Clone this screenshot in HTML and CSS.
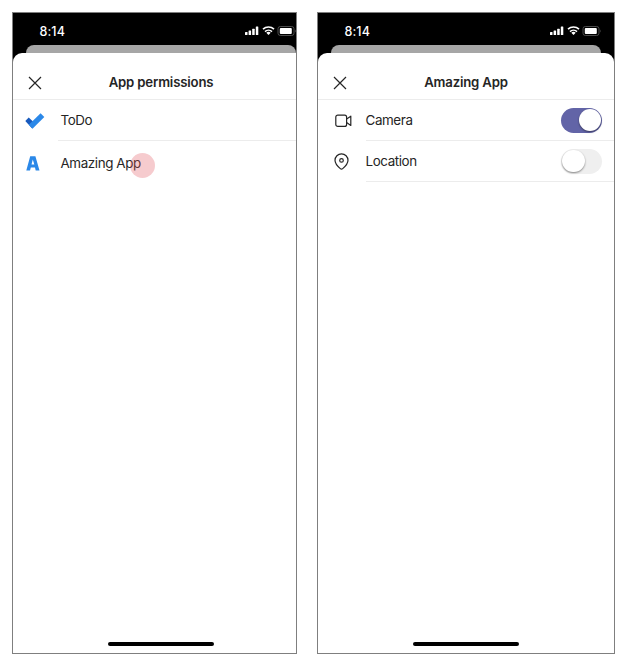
FILE: index.html
```html
<!DOCTYPE html>
<html lang="en">
<head>
<meta charset="utf-8">
<title>App permissions</title>
<link rel="stylesheet" href="styles.css">
</head>
<body>
<svg class="defs" width="0" height="0" aria-hidden="true">
  <symbol id="status" viewBox="0 0 54 12">
    <g fill="#fff">
      <rect x="0" y="7" width="2.5" height="3" rx=".5"/>
      <rect x="3.6" y="5.6" width="2.5" height="4.4" rx=".5"/>
      <rect x="7.2" y="3.8" width="2.5" height="6.2" rx=".5"/>
      <rect x="10.8" y="1.6" width="2.5" height="8.4" rx=".5"/>
      <path d="M23.5 10l-2.200-2.200a3.200 3.200 0 0 1 4.400 0z"/>
      <rect x="34.800" y="2.900" width="12" height="6.200" rx="1"/>
    </g>
    <g fill="none" stroke="#fff" stroke-width="1.600">
      <path d="M18 4.200a8 8 0 0 1 11 0"/>
      <path d="M20 6.600a5.100 5.100 0 0 1 7 0"/>
    </g>
    <rect x="33" y="1.500" width="16" height="9" rx="2.300" fill="none" stroke="#555" stroke-width=".9"/>
    <path d="M50.200 4.600q1.300 1.400 0 2.800z" fill="#555"/>
  </symbol>
  <symbol id="close" viewBox="0 0 14 14">
    <path d="M1 1l12 12M13 1L1 13" fill="none" stroke="#252525" stroke-width="1.200"/>
  </symbol>
</svg>
<main class="board">
  <section class="phone phone-cropped">
    <div class="screen">
      <div class="status"><span class="time">8:14</span><svg class="signals"><use href="#status"/></svg></div>
      <div class="back-card"></div>
      <div class="sheet">
        <header class="header"><svg class="close"><use href="#close"/></svg><h1 class="title">App permissions</h1></header>
        <div class="row">
          <span class="icon"><svg class="todo" viewBox="0 0 20 16"><path d="M.3 8L3.700 4.400 9 9.600 7.200 15.400z" fill="#185abd"/><path d="M3.800 11.700L15.600.2 19.300 4 7.500 15.800z" fill="#2b88e8"/></svg></span>
          <span class="label divided">ToDo</span>
        </div>
        <div class="row row-tall">
          <span class="icon"><svg class="letter" viewBox="0 0 14 15"><path fill-rule="evenodd" d="M4.200.3h5.200l4.100 14.200H9.700L9 11.400H4.800l-.8 3.100H.3zM6.800 3.400L5.500 8.400h2.800z" fill="#2b88e8"/></svg></span>
          <span class="label"><span class="target">Amazing App<i class="tap"></i></span></span>
        </div>
      </div>
      <div class="home"></div>
    </div>
  </section>
  <section class="phone phone-detail">
    <div class="screen">
      <div class="status"><span class="time">8:14</span><svg class="signals"><use href="#status"/></svg></div>
      <div class="back-card"></div>
      <div class="sheet">
        <header class="header"><svg class="close"><use href="#close"/></svg><h1 class="title">Amazing App</h1></header>
        <div class="row">
          <span class="icon"><svg class="camera" viewBox="0 0 17 14"><g fill="none" stroke="#252525" stroke-width="1.200" stroke-linejoin="round"><rect x=".8" y="1.200" width="10.800" height="11.200" rx="2"/><path d="M11.600 5L15.800 2.200v9.200l-4.200-2.800"/></g></svg></span>
          <span class="label divided">Camera<i class="switch on"></i></span>
        </div>
        <div class="row">
          <span class="icon"><svg class="pin" viewBox="0 0 15 17"><g fill="none" stroke="#252525" stroke-width="1.200"><path d="M7.500.8a6.500 6.500 0 0 0-6.500 6.500c0 3.100 2.400 5.900 5.300 8.300a1.900 1.900 0 0 0 2.400 0C11.600 13.200 14 10.400 14 7.300A6.500 6.500 0 0 0 7.500.8z"/><circle cx="7.500" cy="7.400" r="1.800"/></g></svg></span>
          <span class="label divided">Location<i class="switch"></i></span>
        </div>
      </div>
      <div class="home"></div>
    </div>
  </section>
</main>
</body>
</html>
```
FILE: styles.css
```css
* { box-sizing: border-box; }
body { margin: 0; background: #fff; color: #252525; font-family: Inter, "Liberation Sans", sans-serif; }
.defs { display: none; }
.board { display: flex; gap: 20px; padding: 12px; width: 629px; }
.phone { flex: none; width: 298px; height: 642px; border: 1px solid #7f7f7f; overflow: hidden; }
.phone-cropped { width: 285px; }
.screen { display: flex; flex-direction: column; width: 296px; height: 640px; background: linear-gradient(#000 60px, #fff 60px); }
.status { display: flex; flex: none; justify-content: space-between; height: 32px; padding: 0 10px 0 26.5px; }
.time { color: #fff; font-size: 12.5px; font-weight: 500; line-height: 37px; letter-spacing: .1px; }
.signals { width: 54px; height: 12px; margin-top: 12px; }
.back-card { flex: none; width: 270px; height: 8px; margin-left: 13px; border-radius: 8px 8px 0 0; background: #a6a6a6; }
.sheet { flex: 1; border-radius: 9px 9px 0 0; background: #fff; }
.header { display: grid; grid-template-columns: 44px 1fr 44px; align-items: center; height: 47px; padding-top: 13px; border-bottom: 1px solid #ececec; }
.close { width: 14px; height: 14px; margin-left: 15px; }
.title { margin: -2px 0 0; text-align: center; font-size: 13.2px; font-weight: 600; line-height: 18px; letter-spacing: -.18px; white-space: nowrap; }
.row { display: flex; height: 41px; }
.row-tall { height: 44px; }
.icon { display: flex; flex: none; align-items: center; width: 45px; padding-left: 12px; }
.label { display: flex; flex: 1; align-items: center; justify-content: space-between; padding: 0 12px 0 2.5px; font-size: 13.4px; letter-spacing: -.4px; }
.phone-detail .icon { width: 47.5px; }
.phone-detail .label { padding-left: 0; }
.divided { border-bottom: 1px solid #ececec; }
.todo { width: 20px; height: 16px; margin-left: -.5px; margin-top: 1px; }
.letter { width: 14px; height: 15px; margin-left: 1px; margin-top: 1px; }
.camera { width: 17px; height: 14px; margin-left: 5px; }
.pin { width: 15px; height: 17px; margin-left: 4px; }
.target { position: relative; }
.tap { position: absolute; left: 69px; top: -2px; width: 25px; height: 25px; border-radius: 50%; background: rgba(224, 84, 92, .3); }
.switch { display: flex; align-items: center; width: 41px; height: 25px; padding: 1px; border-radius: 13px; background: #efefef; }
.switch::after { content: ""; width: 22.5px; height: 22.5px; border-radius: 50%; background: #fff; box-shadow: 0 1px 2px rgba(0, 0, 0, .45); }
.on { justify-content: flex-end; background: #6264a7; }
.home { flex: none; width: 106px; height: 4px; margin: 0 auto 7px; border-radius: 2px; background: #000; }
```
